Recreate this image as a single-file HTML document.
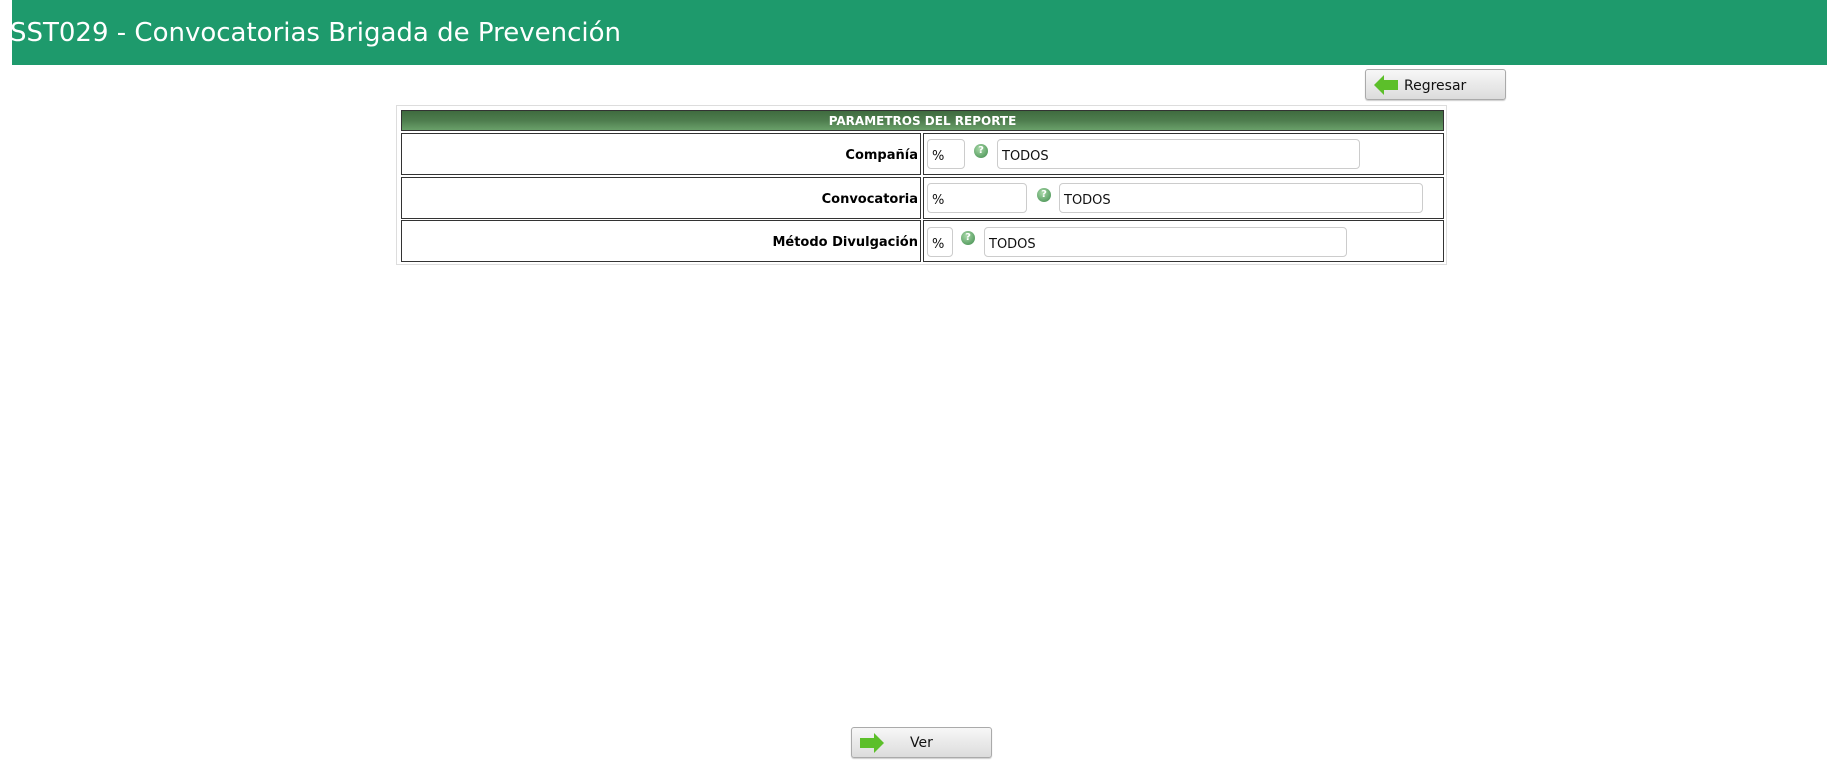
<!DOCTYPE html>
<html><head><meta charset="utf-8"><style>
*{margin:0;padding:0;box-sizing:border-box}
body{width:1836px;height:772px;background:#fff;position:relative;overflow:hidden;font-family:"DejaVu Sans","Liberation Sans",sans-serif}
.hdr{position:absolute;left:12px;top:0;width:1815px;height:65px;background:#1e9a6c;color:#fff;font-size:26px;line-height:66px;text-indent:-2px;overflow:hidden;white-space:nowrap}
.btn{position:absolute;height:31px;border:1px solid #aaa;border-radius:3px;background:linear-gradient(#f7f7f7,#dcdcdc);font-size:14px;color:#111;box-shadow:0 1px 1px #ccc}
.btn svg{position:absolute;left:7px;top:4px}
.tbl{position:absolute;left:396px;top:105px;width:1051px;height:160px;border:1px solid #ddd}
.th{position:absolute;left:4px;top:4px;width:1043px;height:21px;background:linear-gradient(#3f6b3f,#4e7d4e 50%,#6aa06a);color:#fff;font-weight:bold;font-size:12px;text-align:center;line-height:21px;border:1px solid #333}
.cell{position:absolute;border:1px solid #333;height:42px}
.lbl{font-weight:bold;font-size:13px;text-align:right;line-height:44px;padding-right:2px}
.in{position:absolute;border:1px solid #ccc;border-radius:4px;font-size:13px;line-height:34px;padding-left:4px;color:#111;background:#fff;height:30px}
.ic{position:absolute;width:14px;height:14px;border-radius:50%;background:radial-gradient(circle at 40% 35%,#a8d8a8,#3d8a4a);color:#fff;font-size:10px;font-weight:bold;text-align:center;line-height:14px}
</style></head><body>
<div class="hdr">SST029 - Convocatorias Brigada de Prevención</div>
<div class="btn" style="left:1365px;top:69px;width:141px"><svg width="26" height="22" viewBox="0 0 26 22"><path d="M1 11 L11 1 V6 H25 V16 H11 V21 Z" fill="#5cbf2a"/></svg><span style="position:absolute;left:38px;top:8px">Regresar</span></div>
<div class="tbl">
<div class="th">PARAMETROS DEL REPORTE</div>
<div class="cell lbl" style="left:4px;top:27px;width:520px">Compañía</div>
<div class="cell" style="left:526px;top:27px;width:521px"></div>
<div class="cell lbl" style="left:4px;top:71px;width:520px">Convocatoria</div>
<div class="cell" style="left:526px;top:71px;width:521px"></div>
<div class="cell lbl" style="left:4px;top:114px;width:520px">Método Divulgación</div>
<div class="cell" style="left:526px;top:114px;width:521px"></div>
</div>
<div class="in" style="left:927px;top:139px;width:38px">%</div>
<div class="ic" style="left:974px;top:144px">?</div>
<div class="in" style="left:997px;top:139px;width:363px">TODOS</div>
<div class="in" style="left:927px;top:183px;width:100px">%</div>
<div class="ic" style="left:1037px;top:188px">?</div>
<div class="in" style="left:1059px;top:183px;width:364px">TODOS</div>
<div class="in" style="left:927px;top:227px;width:26px">%</div>
<div class="ic" style="left:961px;top:231px">?</div>
<div class="in" style="left:984px;top:227px;width:363px">TODOS</div>
<div class="btn" style="left:851px;top:727px;width:141px"><svg width="26" height="22" viewBox="0 0 26 22"><path d="M25 11 L15 1 V6 H1 V16 H15 V21 Z" fill="#5cbf2a"/></svg><span style="position:absolute;left:58px;top:7px">Ver</span></div>
</body></html>
